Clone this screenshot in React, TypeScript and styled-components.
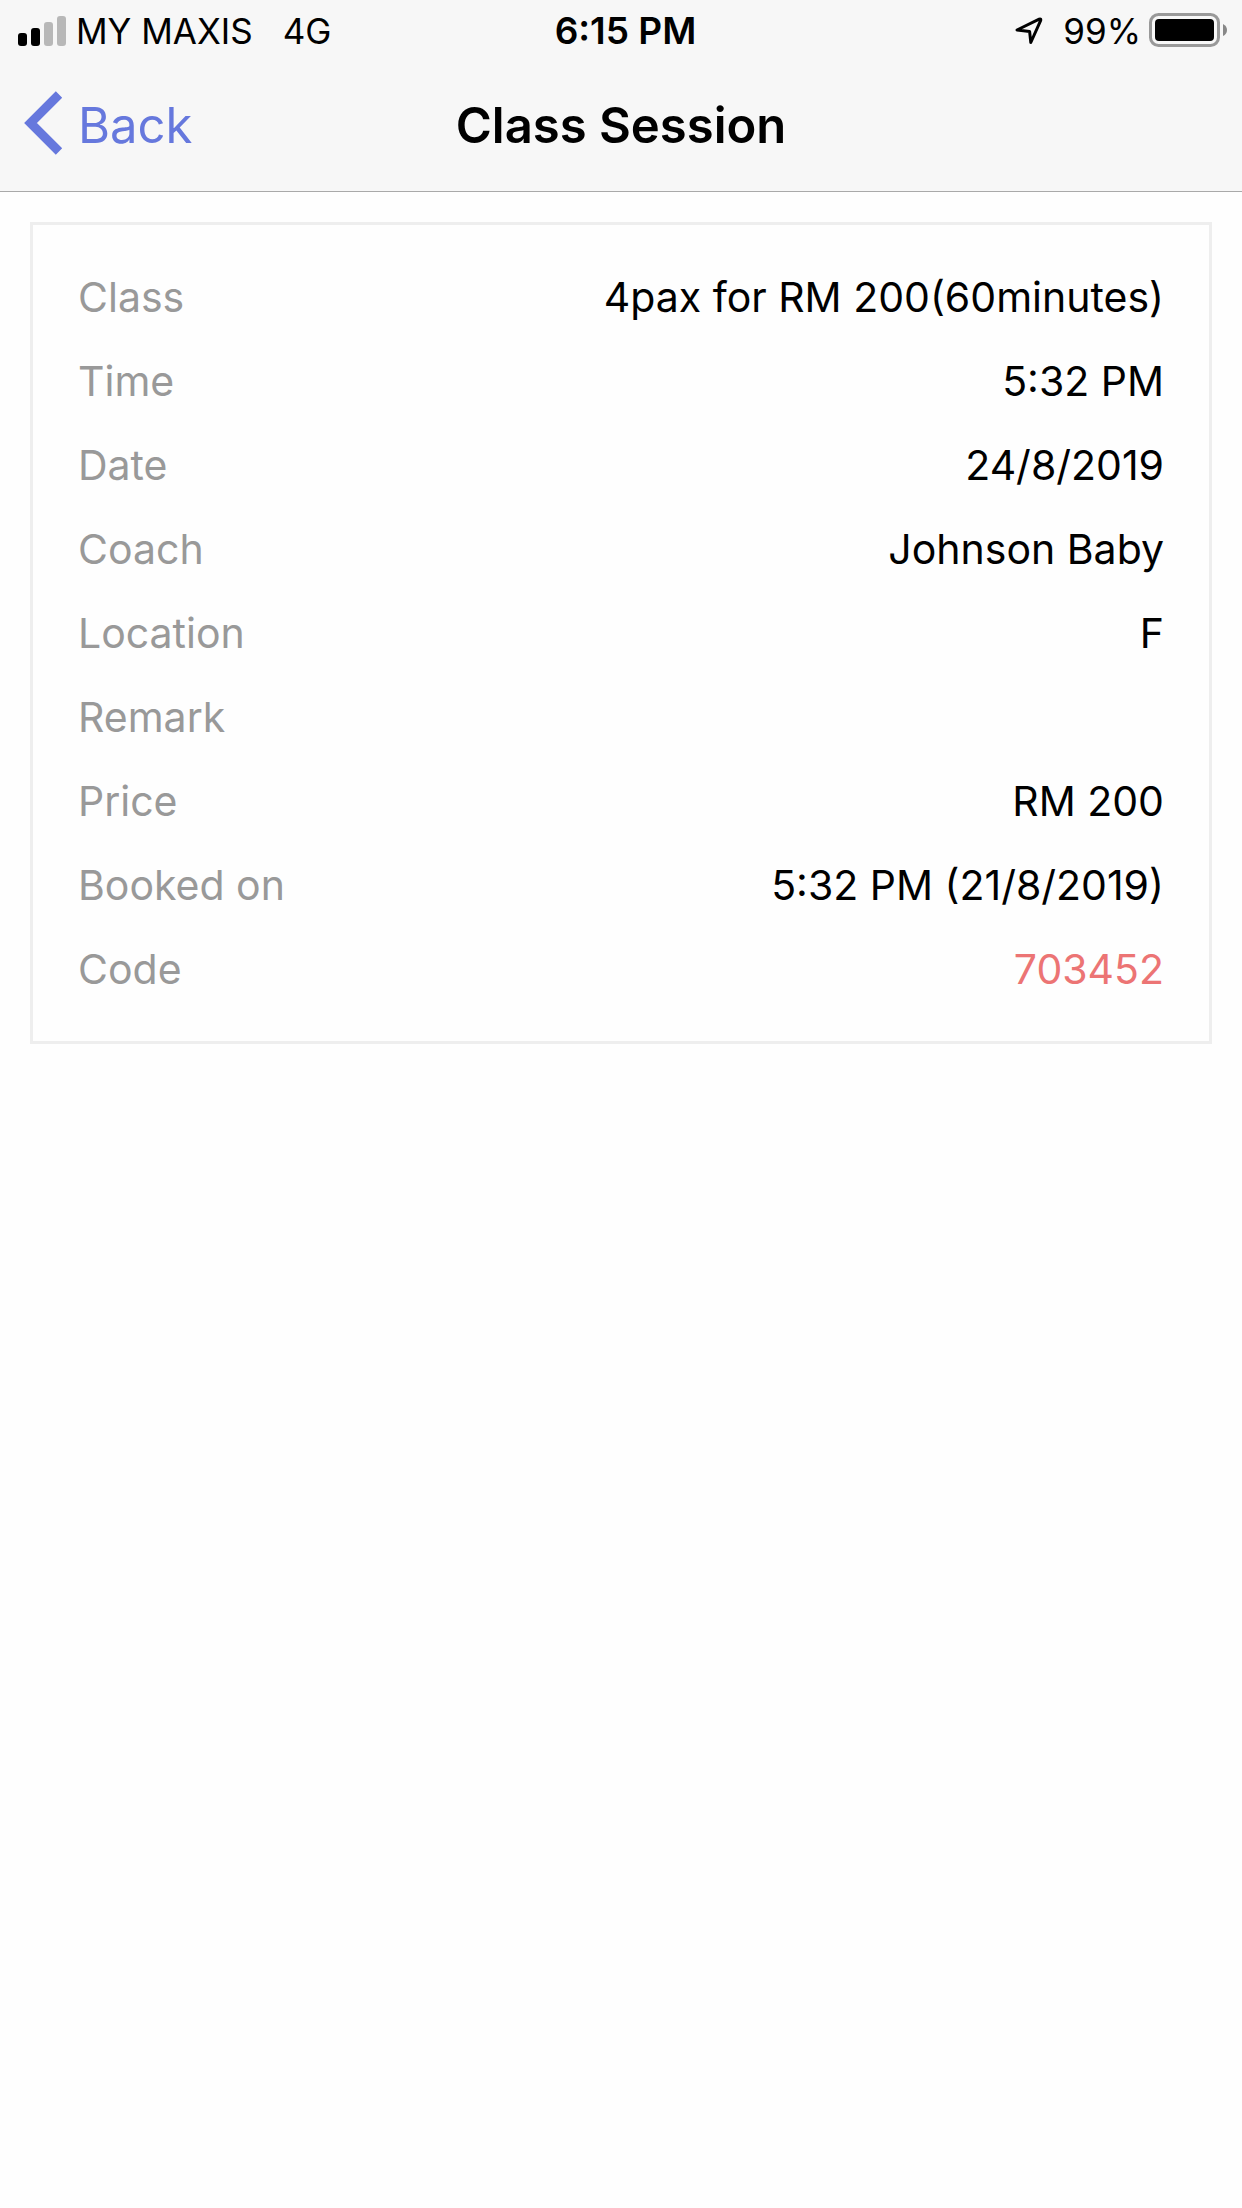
import React from "react";
import styled, { createGlobalStyle } from "styled-components";

const GlobalStyle = createGlobalStyle`
  *, *::before, *::after { box-sizing: border-box; }
  body {
    margin: 0;
    background: #fefefe;
    color: #000;
    font-family: Inter, "Liberation Sans", sans-serif;
  }
`;

const Header = styled.header`
  background: #f7f7f7;
  border-bottom: 1px solid #a9a9a9;
`;

const StatusBar = styled.div`
  display: grid;
  grid-template-columns: 1fr auto 1fr;
  align-items: center;
  height: 62px;
  padding: 0 9px 0 18px;
  font-size: 35px;
  line-height: 62px;
  white-space: nowrap;
`;

const StatusGroup = styled.div<{ $end?: boolean }>`
  display: flex;
  align-items: center;
  justify-content: ${({ $end }) => ($end ? "flex-end" : "flex-start")};
  gap: 8px;
`;

const Network = styled.span`
  margin-left: 22px;
`;

const Clock = styled.time`
  font-size: 37px;
  font-weight: 600;
`;

const Charge = styled.span`
  margin-left: 12px;
`;

const NavBar = styled.nav`
  display: grid;
  grid-template-columns: 1fr auto 1fr;
  align-items: center;
  height: 129px;
  padding: 0 24px 2px;
`;

const BackButton = styled.button`
  display: flex;
  align-items: center;
  justify-self: start;
  gap: 15px;
  padding: 0;
  border: 0;
  background: none;
  color: #6678dd;
  font: inherit;
  font-size: 49px;
  line-height: 64px;
  cursor: pointer;
`;

const Title = styled.h1`
  margin: 0;
  font-size: 49px;
  font-weight: 600;
  line-height: 64px;
`;

const Content = styled.main`
  padding: 30px;
`;

const Card = styled.dl`
  margin: 0;
  padding: 30px 45px;
  border: 3px solid #eee;
  font-size: 41px;
  line-height: 84px;
`;

const Row = styled.div`
  display: flex;
  justify-content: space-between;
  gap: 30px;
`;

const Label = styled.dt`
  color: #999;
`;

const Value = styled.dd<{ $accent?: boolean }>`
  margin: 0;
  text-align: right;
  color: ${({ $accent }) => ($accent ? "#ec7474" : "#000")};
`;

const SignalIcon = () => (
  <svg width="50" height="30" viewBox="0 0 50 30" aria-hidden="true">
    <rect x="0" y="17" width="9" height="13" rx="3" />
    <rect x="13" y="12" width="9" height="18" rx="3" />
    <rect x="26" y="6" width="9" height="24" rx="3" fill="#b8b8b8" />
    <rect x="39" y="0" width="9" height="30" rx="3" fill="#b8b8b8" />
  </svg>
);

const LocationIcon = () => (
  <svg width="28" height="28" viewBox="0 0 28 28" aria-hidden="true">
    <path
      d="M2 13 24.2 2.2Q26.3 1.3 25.6 3.6L15.8 25.5 14.6 14.4Z"
      fill="none"
      stroke="#000"
      strokeWidth="3"
      strokeLinejoin="round"
    />
  </svg>
);

const BatteryIcon = () => (
  <svg width="84" height="36" viewBox="0 0 84 36" aria-hidden="true">
    <rect x="1.5" y="1.5" width="68" height="31" rx="8" fill="none" stroke="#999" strokeWidth="3" />
    <rect x="6" y="6" width="59" height="22" rx="4" />
    <path d="M74 11Q78 13 78 17T74 23Z" fill="#888" />
  </svg>
);

const ChevronIcon = () => (
  <svg width="39" height="70" viewBox="0 0 39 70" aria-hidden="true">
    <path d="M35 3.5 6.5 32 35 60.5" fill="none" stroke="#6678dd" strokeWidth="9" />
  </svg>
);

const details = [
  { label: "Class", value: "4pax for RM 200(60minutes)" },
  { label: "Time", value: "5:32 PM" },
  { label: "Date", value: "24/8/2019" },
  { label: "Coach", value: "Johnson Baby" },
  { label: "Location", value: "F" },
  { label: "Remark", value: "" },
  { label: "Price", value: "RM 200" },
  { label: "Booked on", value: "5:32 PM (21/8/2019)" },
  { label: "Code", value: "703452", accent: true },
];

export default function App() {
  return (
    <>
      <GlobalStyle />
      <Header>
        <StatusBar>
          <StatusGroup>
            <SignalIcon />
            <span>MY MAXIS</span>
            <Network>4G</Network>
          </StatusGroup>
          <Clock>6:15 PM</Clock>
          <StatusGroup $end>
            <LocationIcon />
            <Charge>99%</Charge>
            <BatteryIcon />
          </StatusGroup>
        </StatusBar>
        <NavBar>
          <BackButton type="button">
            <ChevronIcon />
            Back
          </BackButton>
          <Title>Class Session</Title>
        </NavBar>
      </Header>
      <Content>
        <Card>
          {details.map(({ label, value, accent }) => (
            <Row key={label}>
              <Label>{label}</Label>
              <Value $accent={accent}>{value}</Value>
            </Row>
          ))}
        </Card>
      </Content>
    </>
  );
}
